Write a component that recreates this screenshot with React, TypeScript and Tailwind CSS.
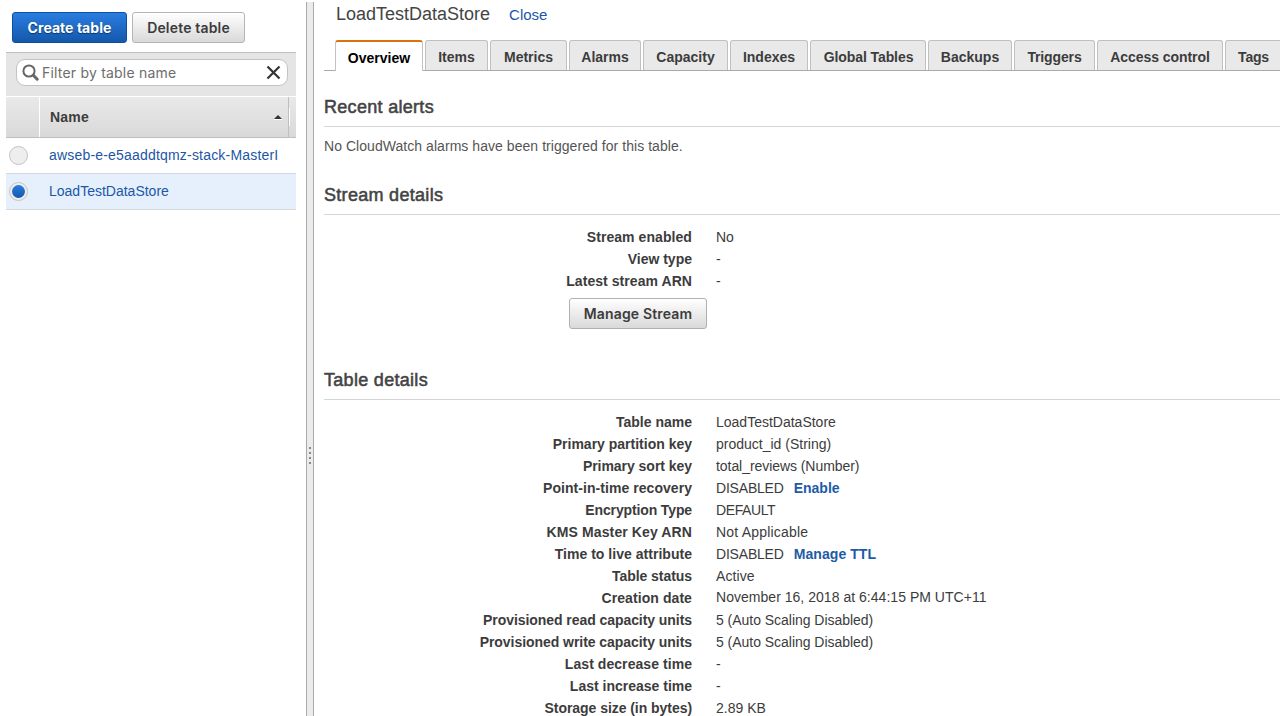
import type { ReactNode } from "react";

const tabs: { label: string; width: string }[] = [
  { label: "Items", width: "w-[63px]" },
  { label: "Metrics", width: "w-[77px]" },
  { label: "Alarms", width: "w-[72px]" },
  { label: "Capacity", width: "w-[85px]" },
  { label: "Indexes", width: "w-[78px]" },
  { label: "Global Tables", width: "w-[116px] tracking-[-0.08px] pl-px" },
  { label: "Backups", width: "w-[84px]" },
  { label: "Triggers", width: "w-[81px] tracking-[-0.13px]" },
  { label: "Access control", width: "w-[126px] tracking-[-0.05px]" },
  { label: "Tags", width: "w-[60px] pr-[3px] tracking-[-0.2px]" },
];

type Row = {
  label: string;
  value: string;
  action?: string;
  labelStyle?: string;
  valueStyle?: string;
  actionStyle?: string;
};

const streamRows: Row[] = [
  { label: "Stream enabled", value: "No", labelStyle: "tracking-[0.07px]" },
  { label: "View type", value: "-" },
  { label: "Latest stream ARN", value: "-", labelStyle: "tracking-[0.06px]" },
];

const tableRows: Row[] = [
  { label: "Table name", value: "LoadTestDataStore" },
  { label: "Primary partition key", value: "product_id (String)" },
  {
    label: "Primary sort key",
    value: "total_reviews (Number)",
    labelStyle: "tracking-[-0.04px]",
    valueStyle: "tracking-[-0.06px]",
  },
  {
    label: "Point-in-time recovery",
    value: "DISABLED",
    action: "Enable",
    labelStyle: "tracking-[0.05px]",
    valueStyle: "tracking-[-0.2px]",
  },
  {
    label: "Encryption Type",
    value: "DEFAULT",
    labelStyle: "tracking-[-0.13px]",
    valueStyle: "tracking-[-0.4px]",
  },
  {
    label: "KMS Master Key ARN",
    value: "Not Applicable",
    labelStyle: "tracking-[0.11px]",
    valueStyle: "tracking-[0.2px]",
  },
  {
    label: "Time to live attribute",
    value: "DISABLED",
    action: "Manage TTL",
    labelStyle: "tracking-[0.03px]",
    valueStyle: "tracking-[-0.2px]",
    actionStyle: "tracking-[0.08px]",
  },
  { label: "Table status", value: "Active", labelStyle: "tracking-[-0.05px]", valueStyle: "tracking-[0.1px]" },
  {
    label: "Creation date",
    value: "November 16, 2018 at 6:44:15 PM UTC+11",
    labelStyle: "tracking-[0.08px]",
    valueStyle: "mb-[2px] tracking-[0.03px]",
  },
  {
    label: "Provisioned read capacity units",
    value: "5 (Auto Scaling Disabled)",
    labelStyle: "tracking-[-0.06px]",
    valueStyle: "tracking-[-0.03px]",
  },
  {
    label: "Provisioned write capacity units",
    value: "5 (Auto Scaling Disabled)",
    labelStyle: "tracking-[-0.05px]",
    valueStyle: "tracking-[-0.03px]",
  },
  { label: "Last decrease time", value: "-", labelStyle: "tracking-[0.06px]" },
  { label: "Last increase time", value: "-" },
  { label: "Storage size (in bytes)", value: "2.89 KB", labelStyle: "tracking-[-0.05px]" },
];

function SectionTitle({ children }: { children: ReactNode }) {
  return (
    <h2 className="h-[33px] border-b border-[#d5d5d5] text-[18px] leading-[26px] tracking-[0.3px] text-[#444] [-webkit-text-stroke:0.55px_#444]">
      {children}
    </h2>
  );
}

function DetailRow({ label, value, action, labelStyle = "", valueStyle = "", actionStyle = "" }: Row) {
  return (
    <div className="flex h-[22px] items-center leading-[22px]">
      <dt className={`w-[368px] text-right font-bold text-[#3c3c3c] ${labelStyle}`}>{label}</dt>
      <dd className={`ml-6 text-[#3c3c3c] ${valueStyle}`}>{value}</dd>
      {action && <a className={`ml-[10px] font-bold text-[#1c5ba8] ${actionStyle}`}>{action}</a>}
    </div>
  );
}

function Sidebar() {
  return (
    <aside className="w-[306px] shrink-0 pl-[6px] pt-3">
      <div className="flex gap-[5px] pl-[6px] font-['Inter',sans-serif] text-[14px] font-semibold tracking-[0.17px]">
        <button className="h-[31px] w-[115px] rounded-[3px] border border-[#0f509d] bg-linear-to-b from-[#2a7de1] to-[#1458ab] font-bold tracking-[0.05px] text-white [text-shadow:0_1px_1px_#0a3566]">
          Create table
        </button>
        <button className="h-[31px] w-[113px] rounded-[3px] border border-[#b5b5b5] bg-linear-to-b from-white to-[#d9d9d9] text-[#3c3c3c]">
          Delete table
        </button>
      </div>
      <div className="mt-[9px] h-[44px] w-[290px] border-t border-[#bfbfbf] bg-[#e5e5e5] pl-[10px] pt-[6px]">
        <div className="flex h-[27px] w-[272px] items-center rounded-[9px] border border-[#c3c3c3] bg-white pl-[5px] pr-[6px]">
          <svg className="shrink-0" width="18" height="18" viewBox="0 0 18 18" fill="none" stroke="#666">
            <circle cx="7" cy="7" r="5.6" strokeWidth="2" />
            <path d="M11.3 11.3L15.2 15.2" strokeWidth="3" strokeLinecap="round" />
          </svg>
          <span className="ml-[2px] flex-1 font-['Inter',sans-serif] text-[14px] tracking-[0.2px] text-[#6d6d6d]">
            Filter by table name
          </span>
          <svg width="15" height="15" viewBox="0 0 15 15" stroke="#333" strokeWidth="2.2">
            <path d="M1.5 1.5l12 12M13.5 1.5l-12 12" />
          </svg>
        </div>
      </div>
      <div className="mt-px flex h-[41px] w-[290px] border-b border-[#bfbfbf] bg-linear-to-b from-[#e9e9e9] to-[#d9d9d9]">
        <div className="w-[34px] border-r border-white" />
        <div className="flex w-[249px] items-center justify-between border-r border-[#bfbfbf] pl-[10px] pr-[6px] font-bold tracking-[0.2px] text-[#3c3c3c]">
          Name
          <svg width="8" height="5" viewBox="0 0 8 5">
            <path d="M0 4L4 0L8 4Z" fill="#333" />
            <path d="M0 4.5H8" stroke="#fff" />
          </svg>
        </div>
        <div className="my-auto h-[18px] w-px bg-white" />
      </div>
      <div className="flex h-[35px] w-[290px] items-center pl-[3px] text-[#1c57a5]">
        <span className="size-[19px] rounded-full border border-[#c4c4c4] bg-[#eee]" />
        <span className="ml-[21px] tracking-[0.19px]">awseb-e-e5aaddtqmz-stack-MasterI</span>
      </div>
      <div className="flex h-[37px] w-[290px] items-center border-y border-[#d5d9dd] bg-[#e6f0fd] pl-[3px] text-[#1c57a5]">
        <span className="flex size-[19px] items-center justify-center rounded-full border border-[#c4c4c4] bg-[#eee]">
          <span className="size-[13px] rounded-full bg-linear-to-b from-[#2a7de1] to-[#1458ab]" />
        </span>
        <span className="ml-[21px]">LoadTestDataStore</span>
      </div>
    </aside>
  );
}

export default function App() {
  return (
    <div className="flex h-[716px] w-[1280px] overflow-hidden bg-white font-['Liberation_Sans',Arial,sans-serif] text-[14px]">
      <Sidebar />
      <div className="mt-[2px] flex w-2 shrink-0 flex-col items-center border-x border-[#aaa] bg-[#ebebeb] pt-[445px]">
        <div className="flex flex-col gap-[3px]">
          <i className="size-[2px] bg-[#888]" />
          <i className="size-[2px] bg-[#888]" />
          <i className="size-[2px] bg-[#888]" />
          <i className="size-[2px] bg-[#888]" />
        </div>
      </div>
      <main className="w-[966px] shrink-0 overflow-hidden pl-[10px]">
        <header className="flex h-[40px] items-baseline pl-[12px] text-[#444]">
          <h1 className="text-[18px] leading-[28px]">LoadTestDataStore</h1>
          <a className="ml-[19px] text-[15px] text-[#1c57a5]">Close</a>
        </header>
        <nav className="flex h-[31px] w-[968px] font-bold text-[#3c3c3c]">
          <div className="w-[11px] shrink-0 border-b border-[#aaa]" />
          <div className="flex h-[31px] w-[88px] shrink-0 items-center justify-center rounded-t-[3px] border-x border-t-2 border-x-[#c3c3c3] border-t-[#d9730d] pt-[4px] text-black">
            Overview
          </div>
          <div className="flex shrink-0 gap-[2px] border-b border-[#aaa] pl-[2px]">
            {tabs.map((tab) => (
              <div
                key={tab.label}
                className={`flex h-[30px] shrink-0 items-center justify-center rounded-t-[3px] border border-b-0 border-[#c0c0c0] bg-[#e9e9e9] pt-[4px] ${tab.width}`}
              >
                {tab.label}
              </div>
            ))}
          </div>
        </nav>
        <section className="pt-[23px]">
          <SectionTitle>Recent alerts</SectionTitle>
          <p className="mt-[9px] leading-[20px] tracking-[0.05px] text-[#555]">
            No CloudWatch alarms have been triggered for this table.
          </p>
        </section>
        <section className="pt-[26px]">
          <SectionTitle>Stream details</SectionTitle>
          <dl className="pt-[11px]">
            {streamRows.map((row) => (
              <DetailRow key={row.label} {...row} />
            ))}
          </dl>
          <button className="ml-[245px] mt-[6px] block h-[31px] w-[138px] rounded-[3px] border border-[#b0b0b0] bg-linear-to-b from-white to-[#d9d9d9] font-['Inter',sans-serif] font-semibold tracking-[0.16px] text-[#3c3c3c]">
            Manage Stream
          </button>
        </section>
        <section className="pt-[38px]">
          <SectionTitle>Table details</SectionTitle>
          <dl className="pt-[11px]">
            {tableRows.map((row) => (
              <DetailRow key={row.label} {...row} />
            ))}
          </dl>
        </section>
      </main>
    </div>
  );
}
